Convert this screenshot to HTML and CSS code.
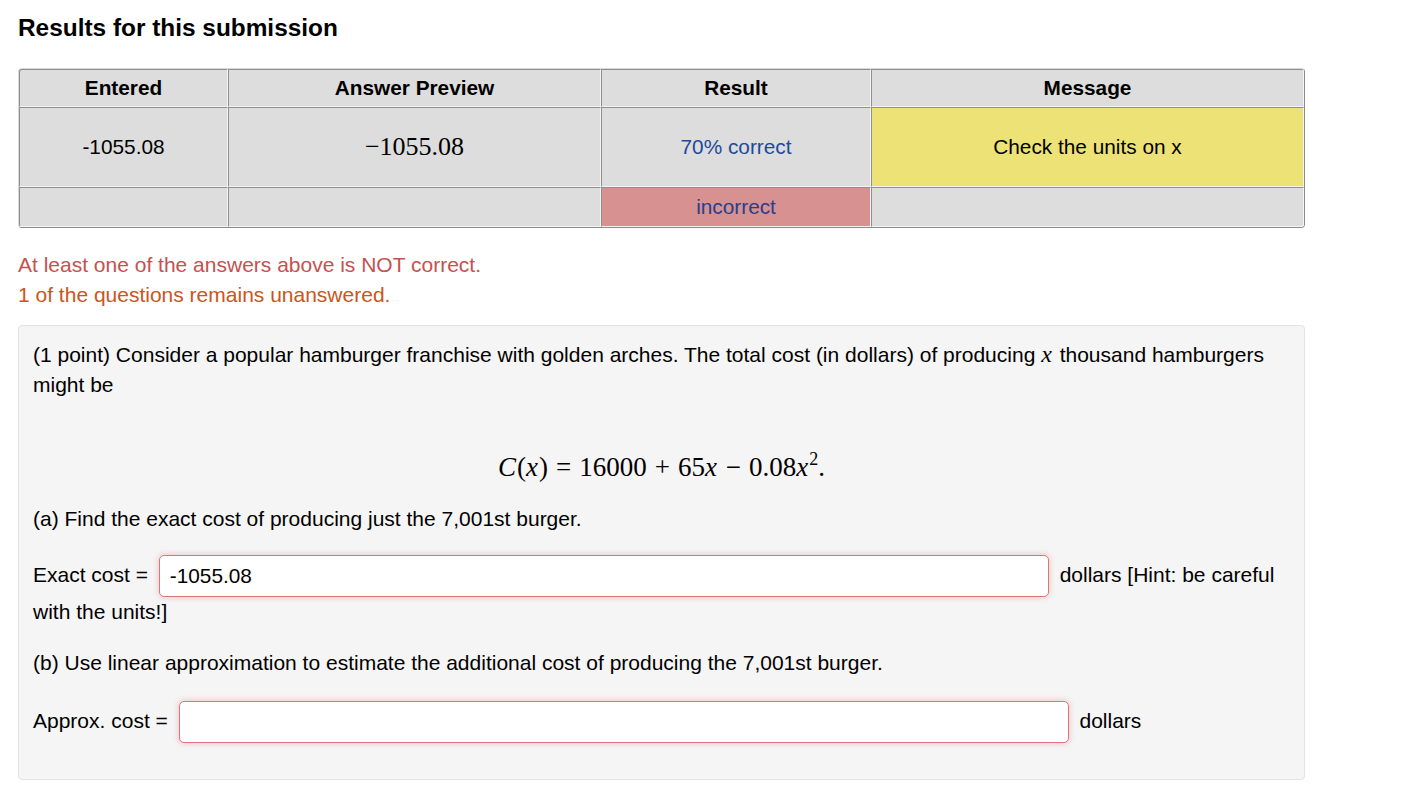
FILE: index.html
```html
<!DOCTYPE html>
<html lang="en">
<head>
    <meta charset="UTF-8">
    <title>Results for this submission</title>
    <link rel="stylesheet" href="styles.css">
</head>
<body>

    <h2 class="results-title">Results for this submission</h2>

    <!-- Attempt results table -->
    <table class="attempt-results">
        <tr class="head-row">
            <th class="col-entered">Entered</th>
            <th class="col-preview">Answer Preview</th>
            <th class="col-result">Result</th>
            <th class="col-message">Message</th>
        </tr>
        <tr class="answer-row">
            <td>-1055.08</td>
            <td class="preview">&minus;1055.08</td>
            <td class="result">70% correct</td>
            <td class="message-warn">Check the units on x</td>
        </tr>
        <tr class="blank-row">
            <td></td>
            <td></td>
            <td class="result incorrect">incorrect</td>
            <td></td>
        </tr>
    </table>

    <div class="summary">
        <div class="not-correct">At least one of the answers above is NOT correct.</div>
        <div class="unanswered">1 of the questions remains unanswered.</div>
    </div>

    <!-- Problem body -->
    <div class="problem">
        <p>(1 point) Consider a popular hamburger franchise with golden arches. The total cost (in dollars) of producing <i class="math">x</i> thousand hamburgers might be</p>

        <div class="display-math">
            <i>C</i>(<i>x</i>)<span class="op">=</span>16000<span class="op">+</span>65<i>x</i><span class="op">&minus;</span>0.08<i>x</i><sup>2</sup>.
        </div>

        <p>(a) Find the exact cost of producing just the 7,001st burger.</p>

        <p class="answer-line">Exact cost = <input type="text" class="answer-input" value="-1055.08"> dollars [Hint: be careful with the units!]</p>

        <p class="part-b">(b) Use linear approximation to estimate the additional cost of producing the 7,001st burger.</p>

        <p class="answer-line last">Approx. cost = <input type="text" class="answer-input" value=""> dollars</p>
    </div>

</body>
</html>
```

FILE: styles.css
```css
body {
    font-family: "Liberation Sans", Arial, sans-serif;
    font-size: 21px;
    line-height: 30px;
    color: #000;
    background-color: #fff;
    margin: 0;
    padding: 0 18px;
}

.results-title {
    font-size: 24.4px;
    font-weight: bold;
    line-height: 30px;
    margin: 13px 0 25px 0;
}

/* Results table */
.attempt-results {
    width: 1287px;
    table-layout: fixed;
    border-collapse: separate;
    border-spacing: 0;
    border: 1px solid;
    border-color: #d8d8d8 #8a8a8a #8a8a8a #d8d8d8;
    border-radius: 4px;
    background-color: #fff;
    font-size: 20.8px;
}

.attempt-results th,
.attempt-results td {
    box-sizing: border-box;
    background-color: #dddddd;
    border: 1px solid;
    border-color: #8f8f8f #f4f4f4 #f4f4f4 #8f8f8f;
    padding: 0 4px;
    text-align: center;
    vertical-align: middle;
    line-height: 24px;
}

.attempt-results th {
    font-weight: bold;
}

.col-entered { width: 209px; }
.col-preview { width: 373px; }
.col-result { width: 270px; }
.col-message { width: 433px; }

.head-row th { height: 38px; }
.answer-row td { height: 80px; }
.blank-row td { height: 40px; }

.attempt-results tr:first-child th:first-child { border-top-left-radius: 3px; }
.attempt-results tr:first-child th:last-child { border-top-right-radius: 3px; }
.attempt-results tr:last-child td:first-child { border-bottom-left-radius: 3px; }
.attempt-results tr:last-child td:last-child { border-bottom-right-radius: 3px; }

.preview {
    font-family: "Liberation Serif", "Times New Roman", serif;
    font-size: 26px;
}

.result {
    color: #1d4a9a;
}

.incorrect {
    background-color: #d69190 !important;
    color: #283f8c;
}

.message-warn {
    background-color: #ede275 !important;
}

/* Summary messages */
.summary {
    margin: 22px 0 15px 0;
}

.not-correct {
    color: #c4524f;
}

.unanswered {
    color: #c9561c;
}

/* Problem box */
.problem {
    width: 1287px;
    box-sizing: border-box;
    background-color: #f5f5f5;
    border: 1px solid #e3e3e3;
    border-radius: 4px;
    padding: 13px 14px 14px 14px;
}

.problem p {
    margin: 0 0 21px 0;
}

.problem p:first-child {
    margin-bottom: 0;
}

.math {
    font-family: "Liberation Serif", "Times New Roman", serif;
    font-size: 24px;
    padding-right: 2px;
}

.display-math {
    font-family: "Liberation Serif", "Times New Roman", serif;
    font-size: 27px;
    line-height: 40px;
    text-align: center;
    margin: 47px 0 17px 0;
}

.display-math i {
    padding-right: 1px;
}

.display-math .op {
    margin: 0 8px;
}

.display-math sup {
    font-size: 18px;
    line-height: 0;
    vertical-align: 11px;
}

.answer-line {
    margin-top: 22px;
}

.part-b {
    margin-top: 22px;
}

.answer-line.last {
    margin-top: 23px;
    margin-bottom: 22px !important;
}

.answer-input {
    box-sizing: border-box;
    width: 890px;
    height: 42px;
    margin: 0 5px;
    padding: 0 10px;
    font-family: "Liberation Sans", Arial, sans-serif;
    font-size: 20.8px;
    color: #000;
    background-color: #fff;
    border: 1px solid #d9787a;
    border-radius: 5px;
    box-shadow: 0 0 6px rgba(220, 120, 120, 0.45);
    vertical-align: middle;
    outline: none;
}
```
